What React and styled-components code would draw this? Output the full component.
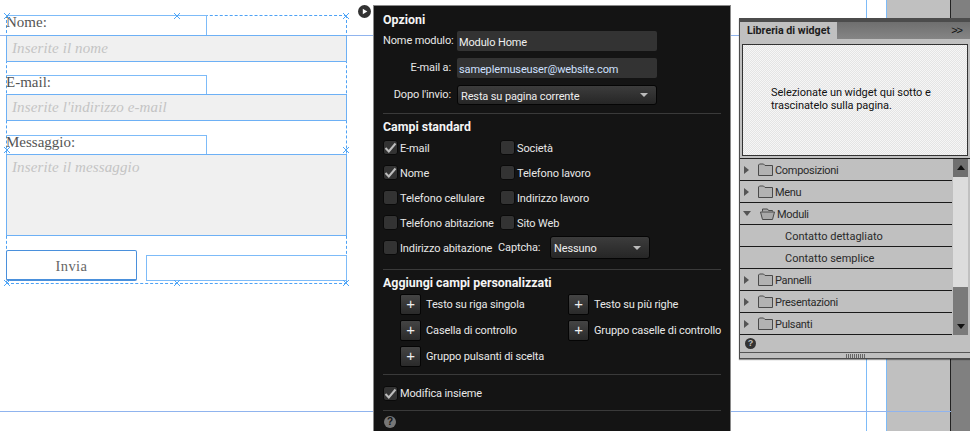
import React from 'react';
import styled, { createGlobalStyle } from 'styled-components';

const Global = createGlobalStyle`
  * { box-sizing: border-box; }
  html, body { margin: 0; padding: 0; background: #fff; }
`;

const Page = styled.div`
  position: relative; width: 970px; height: 431px; overflow: hidden; display: flex; background: #fff;
`;

/* canvas */
const Canvas = styled.div`
  position: relative; width: 373px; flex: none; padding: 15px 0 0 6px;
`;
const Guide = styled.div`
  position: absolute; left: 0; right: ${p => p.$right || 0}px; top: ${p => p.$y}px; height: 1px; background: #90b4ee;
`;
const Selection = styled.div`
  position: relative; width: 341px; height: 269px; border: 1px dashed #4ea2f5;
`;
const FieldStack = styled.div`
  margin: -1px -1px 0 -1px; display: flex; flex-direction: column;
`;
const LabelBox = styled.div`
  width: 201px; height: ${p => p.$h}px; border: 1px solid #7dbbf8; border-bottom: 0; border-left-color: transparent;
  margin-top: ${p => p.$mt || 0}px; text-indent: -1px;
  font: 15px/12px "Liberation Serif", serif; color: #555; white-space: nowrap;
`;
const Field = styled.div`
  width: 341px; height: ${p => p.$h}px; background: #f0f0f0; border: 1px solid #6db0f5;
  font: italic 15px/25px "Liberation Serif", serif; color: #c4c4c4; padding: 0 5px;
  letter-spacing: 0.12px; white-space: nowrap;
`;
const SubmitRow = styled.div`
  display: flex; align-items: flex-start; gap: 9px; margin-top: 14px;
`;
const Send = styled.div`
  width: 131px; height: 31px; border: 1px solid #4a90dc; border-bottom-width: 2px; border-radius: 2px; background: #fff;
  font: 14.5px/30px "Liberation Serif", serif; letter-spacing: 0.4px; color: #666; text-align: center;
`;
const EmptyBox = styled.div`
  width: 201px; height: 26px; margin-top: 5px; border: 1px solid #7dbbf8;
`;
const Handle = styled.svg`
  position: absolute; width: 8px; height: 8px; left: calc(${p => p.$x}% - 4px); top: calc(${p => p.$y}% - 4px);
`;
const Play = styled.svg`
  position: absolute; left: 358px; top: 5px; width: 13px; height: 13px;
`;

/* options */
const Options = styled.div`
  width: 358px; flex: none; margin-top: 5px; height: 426px; background: #141414;
  border: 1px solid #8a8a8a; border-width: 1px 1px 0 1px; padding: 0 9px;
  font: 11px/14px Roboto, sans-serif; letter-spacing: -0.13px; color: #e8e8e8; position: relative;
`;
const Heading = styled.div`
  font-weight: 700; font-size: 12.4px; letter-spacing: 0; color: #f4f4f4; line-height: 14px; padding-top: ${p => p.$pt}px;
`;
const FormRow = styled.div`
  display: flex; align-items: center; margin-top: ${p => p.$mt}px; height: ${p => p.$h || 20}px;
`;
const RowLabel = styled.span`
  width: 68px; text-align: right; margin-right: 6px; white-space: nowrap;
`;
const TextInput = styled.div`
  width: 200px; height: 20px; background: #333; border-radius: 2px; padding: 0 2px;
  line-height: 23px; color: ${p => p.$c || '#f0f0f0'}; white-space: nowrap;
`;
const Select = styled.div`
  width: ${p => p.$w}px; height: ${p => p.$h}px; flex: none; border: 1px solid #050505; border-radius: 3px;
  background: linear-gradient(#3c3c3c, #262626); padding: 0 3px;
  display: flex; align-items: center; justify-content: space-between; color: #eee; white-space: nowrap;
`;
const Nudged = styled.span`
  padding-top: ${p => p.$pt || 2}px;
`;
const Caret = styled.i`
  width: 0; height: 0; border: 4px solid transparent; border-top: 4px solid #bbb; border-bottom: 0; margin-right: 5px;
`;
const Divider = styled.div`
  height: 1px; background: #3a3a3a; margin-top: ${p => p.$mt}px;
`;
const CheckGrid = styled.div`
  display: grid; grid-template-columns: 117px 1fr; grid-auto-rows: 25px; margin-top: 1px;
`;
const CheckItem = styled.div`
  display: flex; align-items: center; gap: 2px; white-space: nowrap; height: 25px;
`;
const Box = styled.span`
  width: 15px; height: 15px; flex: none; background: #333; border: 1px solid #0a0a0a; border-radius: 3px;
  display: flex; align-items: center; justify-content: center;
`;
const CaptchaCell = styled.div`
  display: flex; align-items: center; white-space: nowrap; margin-left: -2px;
`;
const CaptchaLabel = styled.span` width: 52px; `;
const AddGrid = styled.div`
  display: grid; grid-template-columns: 168px 1fr; grid-auto-rows: 26px; margin: 1px 0 0 17px;
`;
const AddItem = styled.div`
  display: flex; align-items: center; gap: 5px; white-space: nowrap;
`;
const Plus = styled.span`
  width: 21px; height: 21px; flex: none; border: 1px solid #050505; border-radius: 2px;
  background: linear-gradient(#444, #2a2a2a); color: #f0f0f0; text-align: center;
  font: 15px/18px "Liberation Sans", sans-serif;
`;
const Spacer = styled.span` width: 2px; flex: none; `;
const HelpDark = styled.span`
  display: block; width: 12px; height: 12px; border-radius: 50%; background: #777; color: #141414;
  font: 700 10px/12px "Liberation Sans", sans-serif; text-align: center; margin-top: 5px; margin-left: 1px;
`;

/* right side */
const Side = styled.div`
  position: relative; flex: 1; min-width: 0; padding: 18px 0 0 8px;
`;
const Gutter = styled.div`
  position: absolute; top: 0; bottom: 0; left: 155px; right: 0; background: #c0c0c0;
  border-left: 1px solid #7dbbf8;
  &::after { content: ""; position: absolute; top: 0; bottom: 0; right: 0; width: 19px; background: #808080; border-left: 1px solid #222; }
`;
const VGuide = styled.div`
  position: absolute; top: 0; bottom: 0; left: 135px; width: 1px; background: #7dbbf8;
`;
const Widget = styled.div`
  position: relative; width: 232px; height: 341px; background: #c0c0c0; border: 1px solid #4c4c4c; border-top-width: 4px; border-right: 0;
  font: 11px/14px Roboto, sans-serif; color: #1c1c1c; box-shadow: 0 1px 1px rgba(0,0,0,.4);
`;
const TabBar = styled.div`
  height: 17px; display: flex; background: linear-gradient(#6f6f6f, #858585);
`;
const Tab = styled.div`
  width: 97px; flex: none; background: #c0c0c0; font-weight: 700; font-size: 10.7px; line-height: 18px; padding-left: 7px; white-space: nowrap;
`;
const More = styled.div`
  flex: 1; text-align: right; padding-right: 9px; color: #111; font: 11px/17px "Liberation Sans", sans-serif; letter-spacing: -1px;
`;
const Preview = styled.div`
  margin: 5px 3px 0 2px; height: 112px; border: 1px solid #333;
  background: repeating-conic-gradient(#e4e4e4 0 25%, #f6f6f6 0 50%) 0 0 / 2px 2px;
  padding: 41px 0 0 28px; line-height: 13px; color: #111; white-space: pre-line; letter-spacing: -0.05px;
`;
const ListArea = styled.div`
  display: flex; margin-top: 2px; border-top: 1px solid #222; height: 177px;
`;
const List = styled.div` width: 212px; flex: none; `;
const Row = styled.div`
  height: 22px; border-bottom: 1px solid #1a1a1a; display: flex; align-items: center;
  padding-left: ${p => p.$child ? 45 : 4}px; letter-spacing: ${p => p.$child ? 0 : -0.3}px;
  color: #2a2a2a; white-space: nowrap; font-size: 11px;
`;
const Arrow = styled.i`
  width: 0; height: 0; margin-right: 9px; flex: none;
  ${p => p.$open
    ? 'border: 4px solid transparent; border-top: 5px solid #555; border-bottom: 0; margin-left: -1px;'
    : 'border: 4px solid transparent; border-left: 5px solid #555; border-right: 0;'}
`;
const Folder = styled.svg` width: 15px; height: 13px; flex: none; margin-right: 2px; `;
const Scroll = styled.div`
  width: 15px; margin-left: 1px; height: 176px; background: #dcdcdc; display: flex; flex-direction: column; justify-content: space-between;
`;
const ScrollUp = styled.div`
  height: 18px; background: #707070; display: flex; justify-content: center; padding-top: 6px;
  &::before { content: ""; height: 0; border: 4px solid transparent; border-bottom: 5px solid #111; border-top: 0; }
`;
const ScrollThumb = styled.div`
  height: 48px; background: #7a7a7a; display: flex; justify-content: center; align-items: flex-end; padding-bottom: 6px;
  &::before { content: ""; height: 0; border: 4px solid transparent; border-top: 5px solid #111; border-bottom: 0; }
`;
const Foot = styled.div`
  height: 18px; border-bottom: 1px solid #555; padding: 3px 0 0 5px;
`;
const HelpLight = styled.span`
  display: block; width: 11px; height: 11px; border-radius: 50%; background: #333; color: #c0c0c0;
  font: 700 9px/11px "Liberation Sans", sans-serif; text-align: center;
`;
const Grip = styled.div`
  height: 6px; display: flex; justify-content: center; padding-top: 1px;
  &::before { content: ""; width: 20px; height: 4px; background: repeating-linear-gradient(90deg, #666 0 1px, transparent 1px 2px); }
`;

const X = ({ x, y }) => (
  <Handle $x={x} $y={y} viewBox="0 0 8 8"><path d="M1 1L7 7M7 1L1 7" stroke="#4fa6f8" strokeWidth="1" fill="none" /></Handle>
);

const Check = ({ on }) => (
  <Box>{on && <svg width="13" height="11" viewBox="0 0 13 11"><path d="M1.5 6L4.8 9.5L11.5 1.5" stroke="#bdbdbd" strokeWidth="2" fill="none" /></svg>}</Box>
);

const FolderIcon = ({ open }) => (
  <Folder viewBox="0 0 15 13">
    {open
      ? <path d="M2.5 4.5V2h5l1 1.5h4v1M.5 5h14l-2 7.5h-10z" fill="#a8a8a8" stroke="#4a4a4a" strokeWidth="1" />
      : <path d="M.5 12.5V2l1-1h4l1.5 1.5h7.500v10z" fill="#b2b2b2" stroke="#4a4a4a" strokeWidth="1" />}
  </Folder>
);

const left = [['E-mail', true], ['Nome', true], ['Telefono cellulare'], ['Telefono abitazione'], ['Indirizzo abitazione']];
const right = ['Società', 'Telefono lavoro', 'Indirizzo lavoro', 'Sito Web'];
const add = ['Testo su riga singola', 'Testo su più righe', 'Casella di controllo', 'Gruppo caselle di controllo', 'Gruppo pulsanti di scelta'];
const folders = [['Composizioni'], ['Menu'], ['Moduli', true]];
const moreFolders = ['Pannelli', 'Presentazioni', 'Pulsanti'];

export default function App() {
  return (
    <Page>
      <Global />
      <Canvas>
        <Guide $y={35} />
        <Guide $y={411} />
        <Selection>
          <FieldStack>
            <LabelBox $h={20}>Nome:</LabelBox>
            <Field $h={27}>Inserite il nome</Field>
            <LabelBox $mt={13} $h={19}>E-mail:</LabelBox>
            <Field $h={27}>Inserite l'indirizzo e-mail</Field>
            <LabelBox $mt={14} $h={19}>Messaggio:</LabelBox>
            <Field $h={82}>Inserite il messaggio</Field>
            <SubmitRow>
              <Send>Invia</Send>
              <EmptyBox />
            </SubmitRow>
          </FieldStack>
          {[[0, 0], [50, 0], [100, 0], [0, 50], [100, 50], [0, 100], [50, 100], [100, 100]].map(([x, y]) => <X key={`${x}-${y}`} x={x} y={y} />)}
        </Selection>
        <Play viewBox="0 0 13 13"><circle cx="6.5" cy="6.5" r="6.5" fill="#333" /><path d="M4.8 3.8L9.3 6.5L4.8 9.2z" fill="#fff" /></Play>
      </Canvas>

      <Options>
        <Heading $pt={7}>Opzioni</Heading>
        <FormRow $mt={4}><RowLabel>Nome modulo:</RowLabel><TextInput>Modulo Home</TextInput></FormRow>
        <FormRow $mt={7}><RowLabel>E-mail a:</RowLabel><TextInput $c="#cfe0ff">sameplemuseuser@website.com</TextInput></FormRow>
        <FormRow $mt={7}><RowLabel><Nudged>Dopo l'invio:</Nudged></RowLabel><Select $w={200} $h={20}><Nudged $pt={3}>Resta su pagina corrente</Nudged><Caret /></Select></FormRow>
        <Divider $mt={8} />
        <Heading $pt={6}>Campi standard</Heading>
        <CheckGrid>
          {left.map(([t, on], i) => (
            <React.Fragment key={t}>
              <CheckItem><Check on={on} /><Nudged>{t}</Nudged></CheckItem>
              {i < 4
                ? <CheckItem><Check /><Nudged>{right[i]}</Nudged></CheckItem>
                : <CaptchaCell><CaptchaLabel>Captcha:</CaptchaLabel><Select $w={100} $h={23}><Nudged $pt={3}>Nessuno</Nudged><Caret /></Select></CaptchaCell>}
            </React.Fragment>
          ))}
        </CheckGrid>
        <Divider $mt={9} />
        <Heading $pt={6}>Aggiungi campi personalizzati</Heading>
        <AddGrid>
          {add.map(t => <AddItem key={t}><Plus>+</Plus><Nudged>{t}</Nudged></AddItem>)}
        </AddGrid>
        <Divider $mt={5} />
        <FormRow $mt={8} $h={20}><Check on /><Spacer /><Nudged>Modifica insieme</Nudged></FormRow>
        <Divider $mt={7} />
        <HelpDark>?</HelpDark>
      </Options>

      <Side>
        <VGuide />
        <Gutter />
        <Guide $y={35} $right={19} />
        <Guide $y={411} $right={19} />
        <Widget>
          <TabBar><Tab>Libreria di widget</Tab><More>&gt;&gt;</More></TabBar>
          <Preview>{'Selezionate un widget qui sotto e\ntrascinatelo sulla pagina.'}</Preview>
          <ListArea>
            <List>
              {folders.map(([t, open]) => <Row key={t}><Arrow $open={open} /><FolderIcon open={open} /><Nudged>{t}</Nudged></Row>)}
              <Row $child><Nudged>Contatto dettagliato</Nudged></Row>
              <Row $child><Nudged>Contatto semplice</Nudged></Row>
              {moreFolders.map(t => <Row key={t}><Arrow /><FolderIcon /><Nudged>{t}</Nudged></Row>)}
            </List>
            <Scroll><ScrollUp /><ScrollThumb /></Scroll>
          </ListArea>
          <Foot><HelpLight>?</HelpLight></Foot>
          <Grip />
        </Widget>
      </Side>
    </Page>
  );
}
